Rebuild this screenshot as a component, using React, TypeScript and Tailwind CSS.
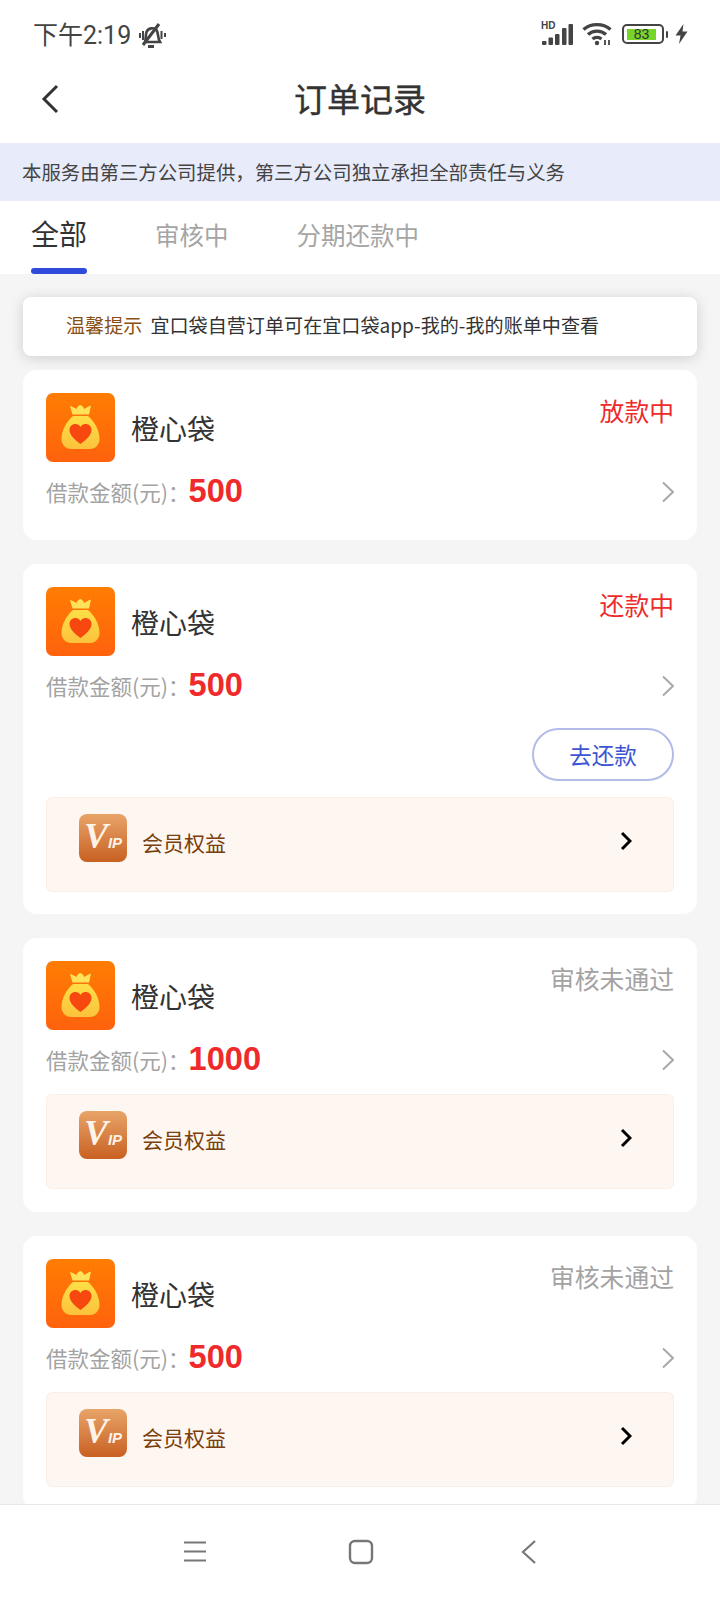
const cjk = "font-['Noto_Sans_CJK_SC','Noto_Sans',sans-serif]"

function BagLogo() {
  return (
    <svg width="69" height="69" viewBox="0 0 69 69" className="shrink-0 rounded-[7px]">
      <defs>
        <linearGradient id="bagBg" x1="0" y1="0" x2="0" y2="1">
          <stop offset="0" stopColor="#ff7d03" />
          <stop offset="1" stopColor="#ff620d" />
        </linearGradient>
        <linearGradient id="bagFill" x1="0" y1="0" x2="0" y2="1">
          <stop offset="0" stopColor="#ffdf47" />
          <stop offset="1" stopColor="#fbc23c" />
        </linearGradient>
      </defs>
      <rect width="69" height="69" fill="url(#bagBg)" />
      <path d="M24 13 C27 14 29 15 30.5 16 C31 14 32.5 12.5 34.5 12 C36 12.5 37.5 14 38 16 C40 15 42 13.5 45 12.5 L43 21.5 L26.5 21.5 Z" fill="#ffe25a" />
      <path
        d="M27 23 L42 23 C48 28 53.5 37 53.5 46 C53.5 52 49 56 44 56 L25 56 C20 56 15.5 52 15.5 46 C15.5 37 21 28 27 23 Z"
        fill="url(#bagFill)"
      />
      <path
        d="M34.5 51 C28 46 23.5 42 23.5 37 C23.5 33 26.5 31 29.5 31 C31.5 31 33.5 32 34.5 34 C35.5 32 37.5 31 39.5 31 C42.5 31 45.5 33 45.5 37 C45.5 42 41 46 34.5 51 Z"
        fill="#f6480f"
      />
    </svg>
  )
}

function GreyArrow() {
  return (
    <svg width="14" height="22" viewBox="0 0 14 22" fill="none" stroke="#a8a8a8" strokeWidth="2" className="mr-[-1px]">
      <path d="M2 1.5 L12 11 L2 20.5" />
    </svg>
  )
}

function VipPanel() {
  return (
    <div className="flex h-[95px] items-start justify-between rounded-[6px] border border-[#faefe6] bg-[#fdf6f1] pl-[32px] pr-[41px] pt-[16px]">
      <div className="flex items-start">
        <div className="flex h-[48px] w-[48px] items-center justify-center rounded-[8px] bg-gradient-to-b from-[#e8a468] to-[#c8601f] italic leading-none text-[#fdf3e8]">
          <span className="mb-[4px] font-['Liberation_Serif',serif] text-[36px] font-bold leading-[36px]">V</span>
          <span className="mt-[8px] font-['Liberation_Sans',sans-serif] text-[15px] font-bold leading-[15px]">IP</span>
        </div>
        <span className="ml-[15px] mt-[13px] text-[21px] leading-[30px] text-[#7a3f0c]">会员权益</span>
      </div>
      <svg width="12" height="20" viewBox="0 0 12 20" fill="none" stroke="#000" strokeWidth="3" className="mt-[17px]">
        <path d="M2 2 L10 10 L2 18" />
      </svg>
    </div>
  )
}

type OrderProps = {
  status: string
  statusClass: string
  amount: string
  repay?: boolean
  vip?: boolean
}

function OrderCard({ status, statusClass, amount, repay, vip }: OrderProps) {
  return (
    <div className={`shrink-0 rounded-[14px] bg-white px-[23px] pt-[23px] ${repay ? "pb-[22px]" : vip ? "pb-[23px]" : "pb-[28px]"}`}>
      <div className="flex items-start justify-between">
        <div className="flex items-center">
          <BagLogo />
          <span className="ml-[16px] text-[28px] leading-[40px] text-[#333]">橙心袋</span>
        </div>
        <span className={`text-[24.8px] leading-[34px] ${statusClass}`}>{status}</span>
      </div>
      <div className="mt-[10px] flex h-[40px] items-center justify-between">
        <div className="flex items-center">
          <span className="text-[21.5px] text-[#a3a3a3]">借款金额(元)：</span>
          <span className="ml-[-1px] mb-[1px] font-['Liberation_Sans',sans-serif] text-[32.6px] font-bold leading-none text-[#ee2a2a]">
            {amount}
          </span>
        </div>
        <GreyArrow />
      </div>
      {repay && (
        <div className="mt-[22px] flex justify-end">
          <div className="flex h-[53px] w-[142px] items-center justify-center rounded-full border-2 border-[#b3bbe8] text-[22.5px] text-[#3d55d0]">
            去还款
          </div>
        </div>
      )}
      {vip && (
        <div className={repay ? "mt-[16px]" : "mt-[14px]"}>
          <VipPanel />
        </div>
      )}
    </div>
  )
}

function StatusBar() {
  return (
    <div className="flex h-[66px] shrink-0 items-start justify-between pl-[33px] pr-[32px] pt-[20px] text-[#444]">
      <div className="flex items-center">
        <span className="font-['Roboto','Noto_Sans_CJK_SC',sans-serif] text-[25px] leading-[32px]">下午2:19</span>
        <svg width="30" height="28" viewBox="0 0 30 28" className="ml-[5px]" fill="none" stroke="#444" strokeWidth="2.6">
          <path d="M9 20 C10 17 9.5 13 10.5 10 C12 6 18 5 20.5 8 C22.5 11 21.5 16 24 20 Z" />
          <path d="M12 24.5 H18" strokeWidth="3" />
          <path d="M7 23 L23 2" strokeWidth="3" />
          <path d="M4 11 V16 M7 9 V18 M25.5 9 V17 M29 11 V15" strokeWidth="2" />
        </svg>
      </div>
      <div className="flex items-center pt-[2px]">
        <div className="relative ml-[1px] h-[24px] w-[33px]">
          <span className="absolute left-0 top-[-2px] font-['Liberation_Sans',sans-serif] text-[10px] font-bold leading-[11px]">HD</span>
          <svg width="33" height="24" viewBox="0 0 33 24" fill="#444">
            <rect x="1" y="19" width="4.5" height="4" rx="1" />
            <rect x="7.5" y="15.5" width="4.5" height="7.5" rx="1" />
            <rect x="14" y="12" width="4.5" height="11" rx="1" />
            <rect x="21" y="6" width="4.5" height="17" rx="1" />
            <rect x="27.5" y="2" width="4.5" height="21" rx="1" />
          </svg>
        </div>
        <svg width="30" height="24" viewBox="0 0 30 24" className="ml-[8px]" fill="none" stroke="#444" strokeWidth="3.4">
          <path d="M1.5 7.5 C9 1 21 1 28.5 7.5" />
          <path d="M6 12.5 C11 8 19 8 24 12.5" />
          <path d="M10.5 17 C13 15 17 15 19.5 17" />
          <circle cx="15" cy="21" r="2.2" fill="#444" stroke="none" />
          <path d="M23 23 V18 M27 18 V23" strokeWidth="1.8" />
        </svg>
        <div className="ml-[10px] flex h-[20px] w-[42px] items-center rounded-[5px] border-[2.5px] border-[#444] px-[3px]">
          <div className="flex h-[11px] w-[29px] items-center justify-center bg-[#79d42a] font-['Liberation_Sans',sans-serif] text-[14px] leading-none text-[#333]">
            83
          </div>
        </div>
        <div className="ml-[2px] h-[7px] w-[2px] rounded-[1px] bg-[#444]" />
        <svg width="13" height="20" viewBox="0 0 13 20" className="ml-[7px]" fill="#444">
          <path d="M8.5 0 L0.5 11.5 H5.5 L4 20 L12.5 7.5 H7.5 Z" />
        </svg>
      </div>
    </div>
  )
}

export default function App() {
  return (
    <div className={`flex h-[1600px] w-[720px] flex-col overflow-hidden bg-white ${cjk}`}>
      <StatusBar />
      <div className="relative flex h-[77px] shrink-0 items-center justify-center pb-[13px]">
        <svg width="18" height="30" viewBox="0 0 18 30" fill="none" stroke="#333" strokeWidth="3" className="absolute left-[41px] top-[18px]">
          <path d="M16 2 L3 15 L16 28" />
        </svg>
        <span className="text-[33px] leading-[44px] text-[#333] [-webkit-text-stroke:0.4px_#333]">订单记录</span>
      </div>
      <div className="flex h-[58px] shrink-0 items-center bg-[#e8ebfa] pl-[22px] text-[19.4px] text-[#444]">
        本服务由第三方公司提供，第三方公司独立承担全部责任与义务
      </div>
      <div className="flex h-[73px] shrink-0 items-start pl-[31px]">
        <div className="flex h-full flex-col items-center">
          <span className="mt-[13px] text-[28px] leading-[38px] text-[#333]">全部</span>
          <div className="mt-auto h-[6px] w-[56px] rounded-[3px] bg-[#2f4bdc]" />
        </div>
        <span className="ml-[68px] mt-[16px] text-[24.5px] leading-[36px] text-[#a5a5a5]">审核中</span>
        <span className="ml-[68px] mt-[16px] text-[24.5px] leading-[36px] text-[#a5a5a5]">分期还款中</span>
      </div>
      <div className="flex min-h-0 flex-1 flex-col overflow-hidden bg-[#f5f5f5] px-[23px] pt-[23px]">
        <div className="flex h-[59px] shrink-0 items-center rounded-[8px] bg-white pb-[3px] pl-[43px] text-[19.1px] shadow-[0_2px_14px_rgba(0,0,0,0.16)]">
          <span className="text-[#8a4f12]">温馨提示</span>
          <span className="ml-[8px] text-[#333]">宜口袋自营订单可在宜口袋app-我的-我的账单中查看</span>
        </div>
        <div className="mt-[14px] flex flex-col gap-[24px]">
          <OrderCard status="放款中" statusClass="text-[#ee2a2a]" amount="500" />
          <OrderCard status="还款中" statusClass="text-[#ee2a2a]" amount="500" repay vip />
          <OrderCard status="审核未通过" statusClass="text-[#a3a3a3]" amount="1000" vip />
          <OrderCard status="审核未通过" statusClass="text-[#a3a3a3]" amount="500" vip />
        </div>
      </div>
      <div className="flex h-[96px] shrink-0 items-start border-t border-[#e8e8e8] bg-white pl-[183px] pt-[34px]">
        <svg width="24" height="24" viewBox="0 0 24 24" fill="none" stroke="#777" strokeWidth="2">
          <path d="M1 3.5 H23 M1 12.5 H23 M1 21.5 H23" />
        </svg>
        <svg width="26" height="26" viewBox="0 0 26 26" className="ml-[141px]" fill="none" stroke="#777" strokeWidth="2.4">
          <rect x="2" y="2" width="22" height="22" rx="5" />
        </svg>
        <svg width="18" height="26" viewBox="0 0 18 26" className="ml-[146px]" fill="none" stroke="#777" strokeWidth="2.2">
          <path d="M15 2 L3 13 L15 24" />
        </svg>
      </div>
    </div>
  )
}
